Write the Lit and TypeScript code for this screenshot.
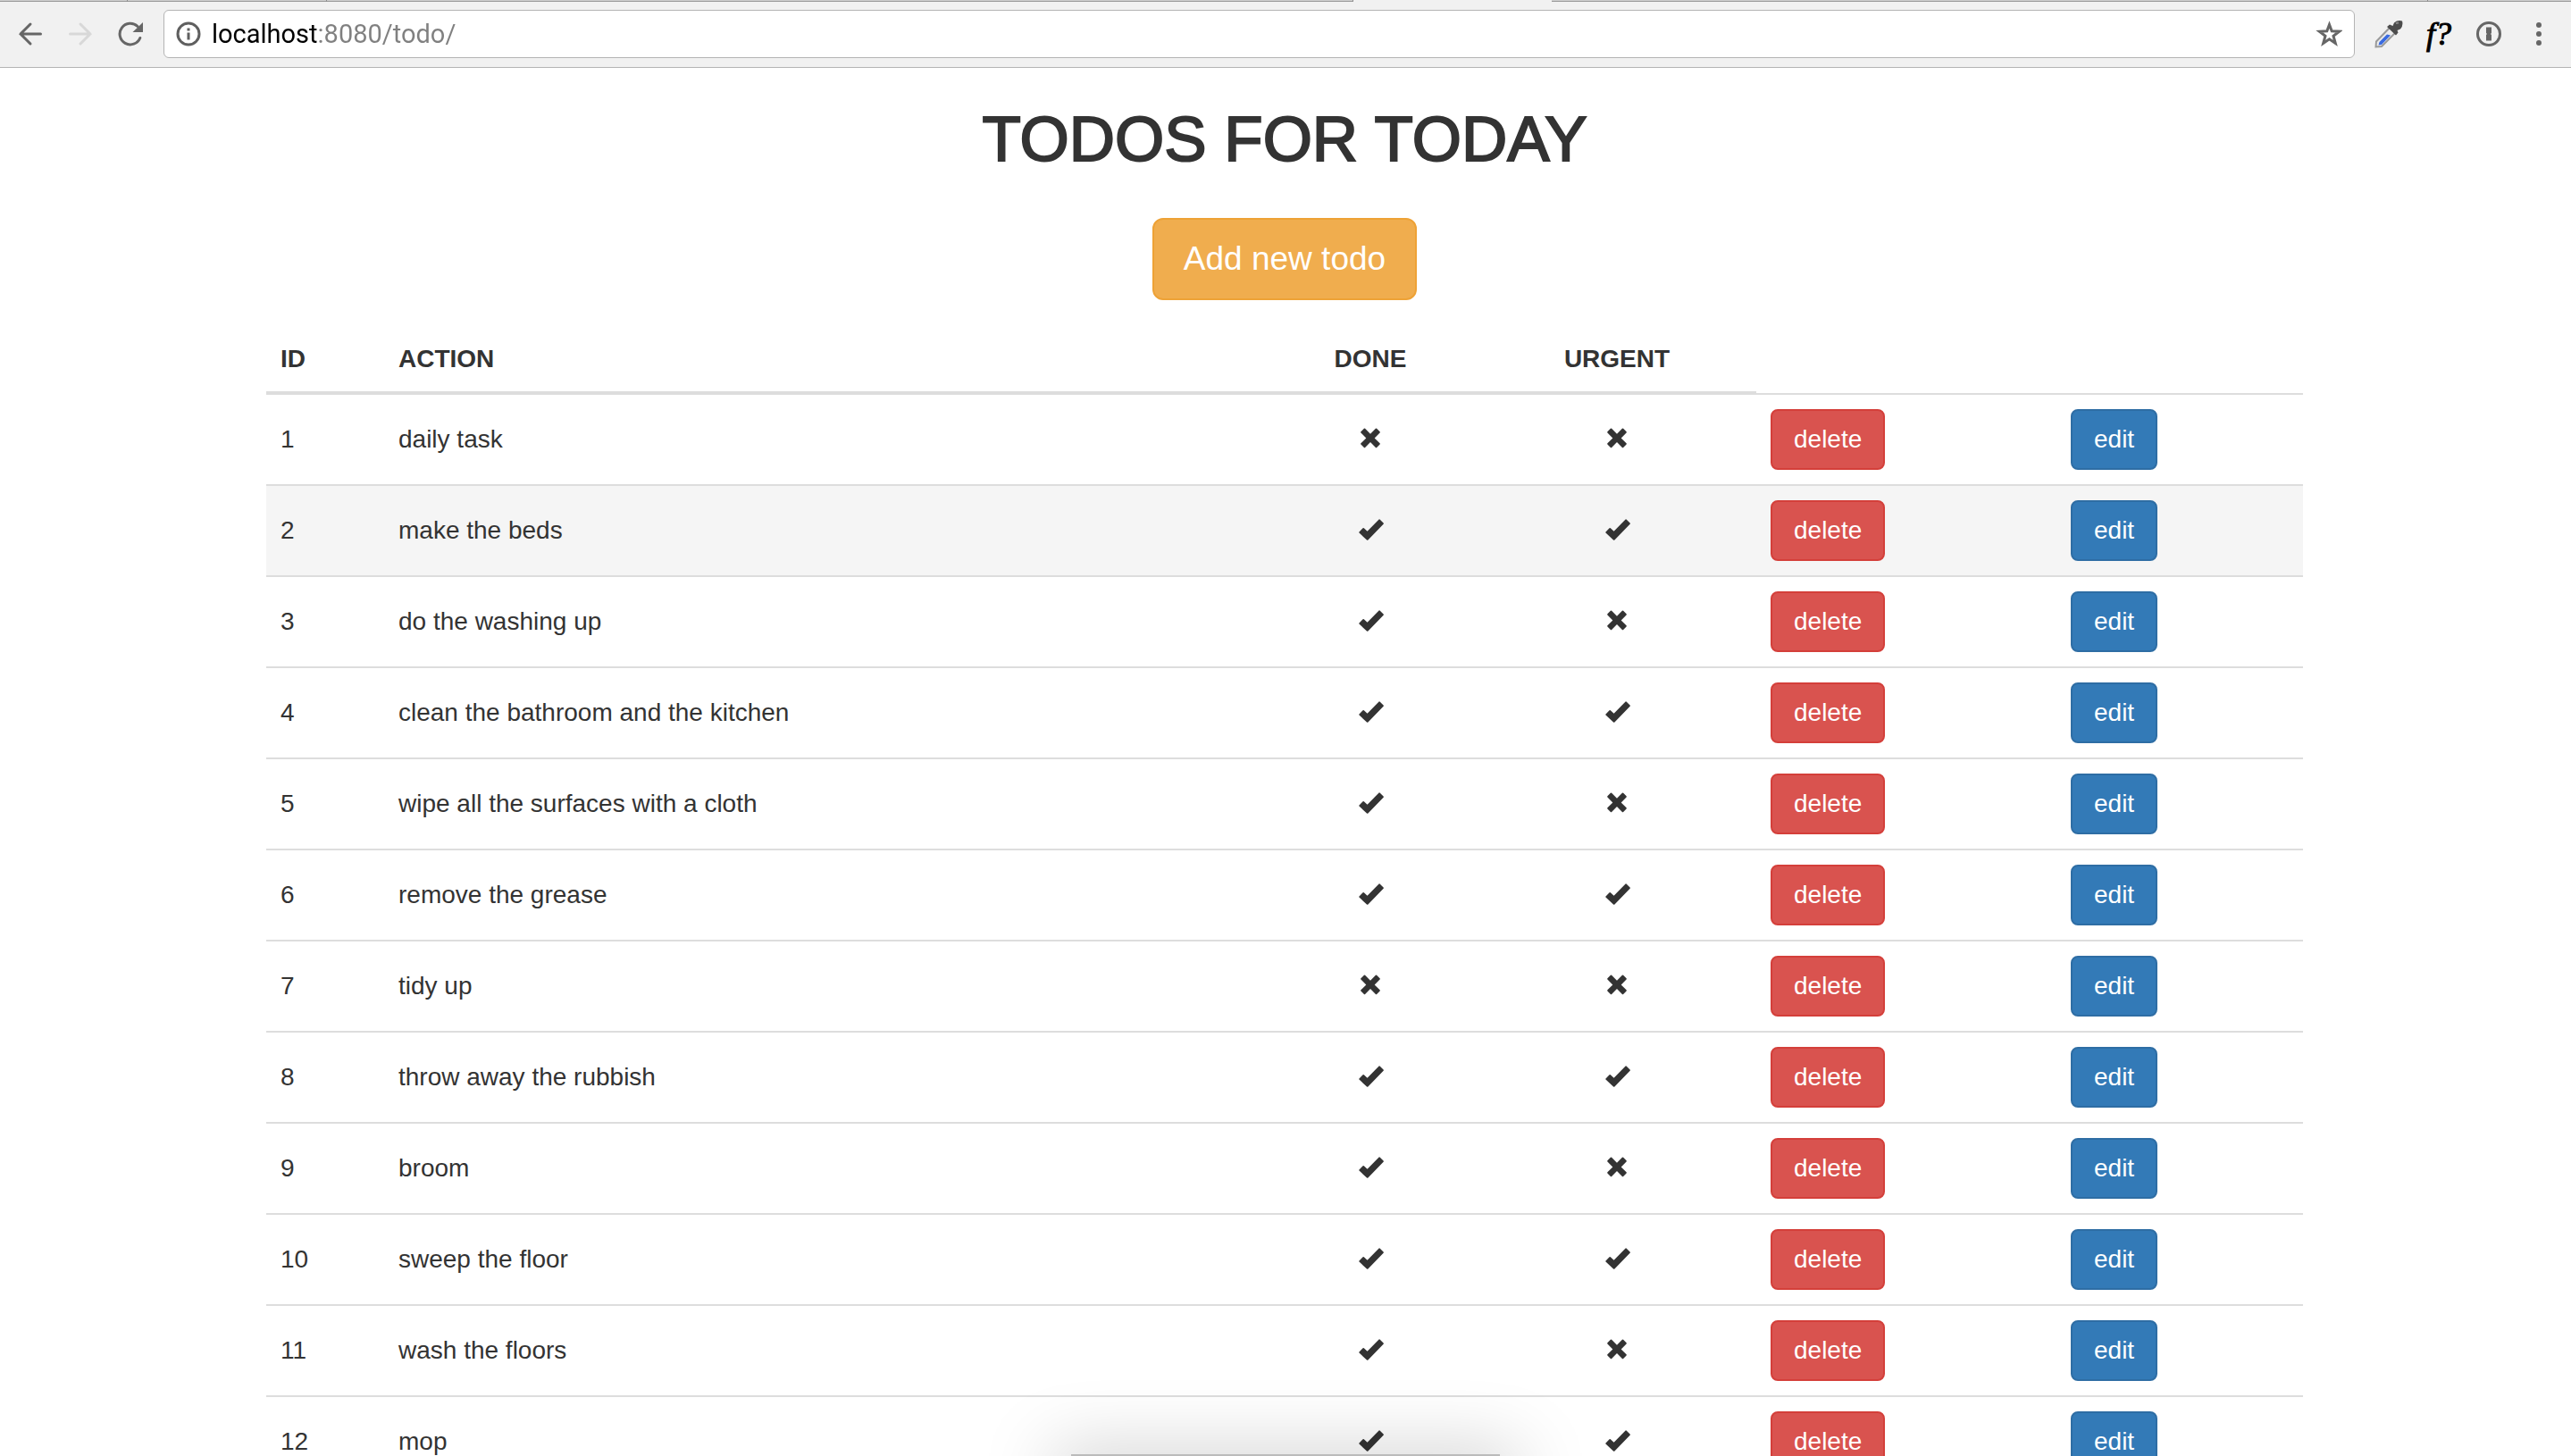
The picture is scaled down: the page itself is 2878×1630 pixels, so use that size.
import { LitElement, html, css, svg } from "lit";
import { customElement, state } from "lit/decorators.js";

interface Todo {
  id: number;
  action: string;
  done: boolean;
  urgent: boolean;
}

const TODOS: Todo[] = [
  { id: 1, action: "daily task", done: false, urgent: false },
  { id: 2, action: "make the beds", done: true, urgent: true },
  { id: 3, action: "do the washing up", done: true, urgent: false },
  { id: 4, action: "clean the bathroom and the kitchen", done: true, urgent: true },
  { id: 5, action: "wipe all the surfaces with a cloth", done: true, urgent: false },
  { id: 6, action: "remove the grease", done: true, urgent: true },
  { id: 7, action: "tidy up", done: false, urgent: false },
  { id: 8, action: "throw away the rubbish", done: true, urgent: true },
  { id: 9, action: "broom", done: true, urgent: false },
  { id: 10, action: "sweep the floor", done: true, urgent: true },
  { id: 11, action: "wash the floors", done: true, urgent: false },
  { id: 12, action: "mop", done: true, urgent: true },
];

const CHECK = svg`<path d="M0.5 14.5 L4.6 10.2 Q5.2 9.8 5.8 10.3 L9.6 13.8 L22.6 0.6 Q23.2 0.1 23.8 0.7 L27.6 4.5 Q28.2 5.1 27.6 5.8 L10.4 23.4 Q9.7 24 9 23.4 L0.5 15.6 Q0 15 0.5 14.5 Z"/>`;
const CROSS = svg`<path d="M2.4 4.3 L5.9 0.8 Q6.5 0.3 7.1 0.8 L13 6.7 L18.9 0.8 Q19.5 0.3 20.1 0.8 L23.6 4.3 Q24.1 4.9 23.6 5.5 L17.7 11.4 L23.6 17.3 Q24.1 17.9 23.6 18.5 L20.1 22 Q19.5 22.5 18.9 22 L13 16.1 L7.1 22 Q6.5 22.5 5.9 22 L2.4 18.5 Q1.9 17.9 2.4 17.3 L8.3 11.4 L2.4 5.5 Q1.9 4.9 2.4 4.3 Z"/>`;

@customElement("browser-toolbar")
export class BrowserToolbar extends LitElement {
  static styles = css`
    :host {
      display: block;
      background: #f1f1f1;
      border-bottom: 1px solid #b4b4b4;
    }
    .tabs {
      display: flex;
      height: 2px;
    }
    .tab {
      flex: none;
      box-sizing: border-box;
      background: #cfcfcf;
      border-bottom: 1px solid #999;
      border-right: 1px solid #8c8c8c;
    }
    .tab-a { width: 143px; }
    .tab-b { width: 223px; }
    .tab-c { width: 1149px; }
    .tab-active { width: 222px; }
    .tab-d { width: 981px; }
    .tab-rest { flex: 1; border-right: 0; }
    .bar {
      display: flex;
      align-items: center;
      height: 72px;
      padding-bottom: 1px;
    }
    .icon-button {
      display: flex;
      flex: none;
      align-items: center;
      justify-content: center;
      width: 56px;
      height: 56px;
      padding: 0;
      border: 0;
      background: none;
      color: #666;
    }
    .icon-button:disabled { color: #d8d8d8; }
    .nav {
      display: flex;
      padding: 0 9px 0 6px;
    }
    .address {
      display: flex;
      flex: 1;
      align-items: center;
      gap: 11px;
      box-sizing: border-box;
      height: 54px;
      padding-left: 12px;
      border: 1px solid #b4b4b4;
      border-radius: 6px;
      background: #fff;
      color: #5f5f5f;
    }
    .address-input {
      flex: 1;
      min-width: 0;
      padding: 0;
      border: 0;
      outline: 0;
      font: 29px/36px Roboto, sans-serif;
      color: transparent;
      background: linear-gradient(90deg, #000 119px, #808080 119px);
      -webkit-background-clip: text;
      background-clip: text;
    }
    .extensions {
      display: flex;
      padding: 0 8px 0 10px;
    }
    .glyph {
      font: italic 36px/40px "Liberation Serif", serif;
      color: #000;
      -webkit-text-stroke: 1px #000;
    }
    svg { display: block; }
  `;

  render() {
    return html`
      <div class="tabs">
        <div class="tab tab-a"></div>
        <div class="tab tab-b"></div>
        <div class="tab tab-c"></div>
        <div class="tab-active"></div>
        <div class="tab tab-d"></div>
        <div class="tab tab-rest"></div>
      </div>
      <div class="bar">
        <nav class="nav">
          <button class="icon-button" aria-label="Back">
            <svg width="28" height="28" viewBox="0 0 28 28" fill="none" stroke="currentColor" stroke-width="3" stroke-linecap="round">
              <path d="M25.500 14H3M14 3L3 14L14 25" />
            </svg>
          </button>
          <button class="icon-button" aria-label="Forward" disabled>
            <svg width="28" height="28" viewBox="0 0 28 28" fill="none" stroke="currentColor" stroke-width="3" stroke-linecap="round">
              <path d="M2.500 14H25M14 3L25 14L14 25" />
            </svg>
          </button>
          <button class="icon-button" aria-label="Reload">
            <svg width="28" height="28" viewBox="0 0 28 28" fill="none" stroke="currentColor" stroke-width="3" stroke-linecap="round">
              <path d="M24.800 18.500A11.800 11.800 0 1 1 22 5.500" />
              <path d="M28 1V12H16.500Z" fill="currentColor" stroke="none" />
            </svg>
          </button>
        </nav>
        <div class="address">
          <svg width="30" height="30" viewBox="0 0 30 30" fill="none" stroke="currentColor" stroke-width="3">
            <circle cx="15" cy="15" r="12" />
            <path d="M15 13.500V21.500M15 8.500V11.500" />
          </svg>
          <input class="address-input" type="text" aria-label="Address" .value=${"localhost:8080/todo/"} />
          <button class="icon-button" aria-label="Bookmark this page">
            <svg width="30" height="30" viewBox="0 0 30 30" fill="none" stroke="currentColor" stroke-width="3">
              <path d="M15.500 4.500L18.200 11.800L26.500 12.200L20 17.200L22.300 25.500L15.500 20.800L8.700 25.500L11 17.200L4.500 12.200L12.800 11.800Z" />
            </svg>
          </button>
        </div>
        <div class="extensions">
          <button class="icon-button" aria-label="Color picker">
            <svg width="32" height="32" viewBox="0 0 32 32">
              <path d="M1.500 30.500L2 24.500L17 9L23 15L8 30Z" fill="#ececec" stroke="#9a9a9a" stroke-width="2" />
              <path d="M4.500 28.500L5.500 25L14 16.500L18 17.500L8 28Z" fill="#3a6be0" />
              <path d="M14 8L17 5.500L20.500 7L22 3.500Q26 0 31 1.500Q32.500 7 29 10.500L25.500 12L26.500 14.500L24 17.500Z" fill="#4c4c4c" />
              <path d="M24 4L27 3.500" stroke="#8a8a8a" stroke-width="2" />
            </svg>
          </button>
          <button class="icon-button glyph" aria-label="Font finder">f?</button>
          <button class="icon-button" aria-label="Password manager">
            <svg width="30" height="30" viewBox="0 0 30 30">
              <circle cx="15" cy="15" r="12.500" fill="none" stroke="#666" stroke-width="3" />
              <path d="M12 7.500H18V14L17 15L18 16V22.500H12V16L13 15L12 14Z" fill="#666" />
            </svg>
          </button>
          <button class="icon-button" aria-label="Menu">
            <svg width="8" height="28" viewBox="0 0 8 28" fill="currentColor">
              <circle cx="4" cy="4" r="3" /><circle cx="4" cy="14" r="3" /><circle cx="4" cy="24" r="3" />
            </svg>
          </button>
        </div>
      </div>
    `;
  }
}

@customElement("app-root")
export class AppRoot extends LitElement {
  static styles = css`
    :host {
      display: block;
      position: relative;
      height: 100vh;
      overflow: hidden;
      background: #fff;
      color: #333;
      font: 28px/40px "Liberation Sans", Arial, sans-serif;
    }
    .page {
      box-sizing: border-box;
      max-width: 2342px;
      margin: 0 auto;
      padding: 40px 32px 0 30px;
    }
    .title {
      margin: 0;
      text-align: center;
      font-size: 71px;
      line-height: 80px;
      font-weight: 400;
      -webkit-text-stroke: 2px #333;
    }
    .add {
      display: flex;
      justify-content: center;
      padding: 48px 0 30px;
    }
    .btn {
      display: inline-block;
      padding: 12px 24px;
      border: 2px solid;
      border-radius: 8px;
      color: #fff;
      font: inherit;
    }
    .btn-add {
      padding: 20px 33px;
      border-radius: 12px;
      font-size: 37px;
      line-height: 48px;
      background: #f0ad4e;
      border-color: #eea236;
    }
    .btn-delete { background: #d9534f; border-color: #d43f3a; }
    .btn-edit { background: #337ab7; border-color: #2e6da4; }
    .todos {
      width: 100%;
      table-layout: fixed;
      border-collapse: separate;
      border-spacing: 0;
    }
    .col-id { width: 132px; }
    .col-done { width: 240px; }
    .col-urgent { width: 312px; }
    .col-delete { width: 336px; }
    .col-edit { width: 276px; }
    .head, .cell {
      padding: 16px;
      text-align: left;
      vertical-align: middle;
    }
    .head {
      border-bottom: 2px solid #ddd;
      font-weight: 700;
    }
    .head-blank { padding: 0; }
    .cell { border-top: 2px solid #ddd; }
    .head.flag, .cell.flag { text-align: center; }
    .row:nth-child(2) { background: #f5f5f5; }
    .mark {
      display: block;
      margin: 0 auto 2px;
      fill: #333;
    }
    .btn-holder { display: flex; }
    .dock {
      position: absolute;
      bottom: 0;
      left: 50%;
      width: 480px;
      height: 2px;
      margin-left: -240px;
      background: #bbb;
      box-shadow: 0 20px 80px 20px rgba(0, 0, 0, 0.25);
    }
  `;

  @state() private todos = TODOS;

  private mark(on: boolean) {
    return html`<svg class="mark" width="30" height="24" viewBox="-2 0 30 24" role="img" aria-label=${on ? "yes" : "no"}>
      ${on ? CHECK : CROSS}
    </svg>`;
  }

  render() {
    return html`
      <browser-toolbar></browser-toolbar>
      <main class="page">
        <h1 class="title">TODOS FOR TODAY</h1>
        <div class="add"><button class="btn btn-add">Add new todo</button></div>
        <table class="todos">
          <colgroup>
            <col class="col-id" /><col /><col class="col-done" /><col class="col-urgent" />
            <col class="col-delete" /><col class="col-edit" />
          </colgroup>
          <thead>
            <tr>
              <th class="head">ID</th>
              <th class="head">ACTION</th>
              <th class="head flag">DONE</th>
              <th class="head flag">URGENT</th>
              <td class="head-blank"></td>
              <td class="head-blank"></td>
            </tr>
          </thead>
          <tbody>
            ${this.todos.map(
              (todo) => html`<tr class="row">
                <td class="cell">${todo.id}</td>
                <td class="cell">${todo.action}</td>
                <td class="cell flag">${this.mark(todo.done)}</td>
                <td class="cell flag">${this.mark(todo.urgent)}</td>
                <td class="cell"><div class="btn-holder"><button class="btn btn-delete">delete</button></div></td>
                <td class="cell"><div class="btn-holder"><button class="btn btn-edit">edit</button></div></td>
              </tr>`
            )}
          </tbody>
        </table>
      </main>
      <div class="dock"></div>
    `;
  }
}
